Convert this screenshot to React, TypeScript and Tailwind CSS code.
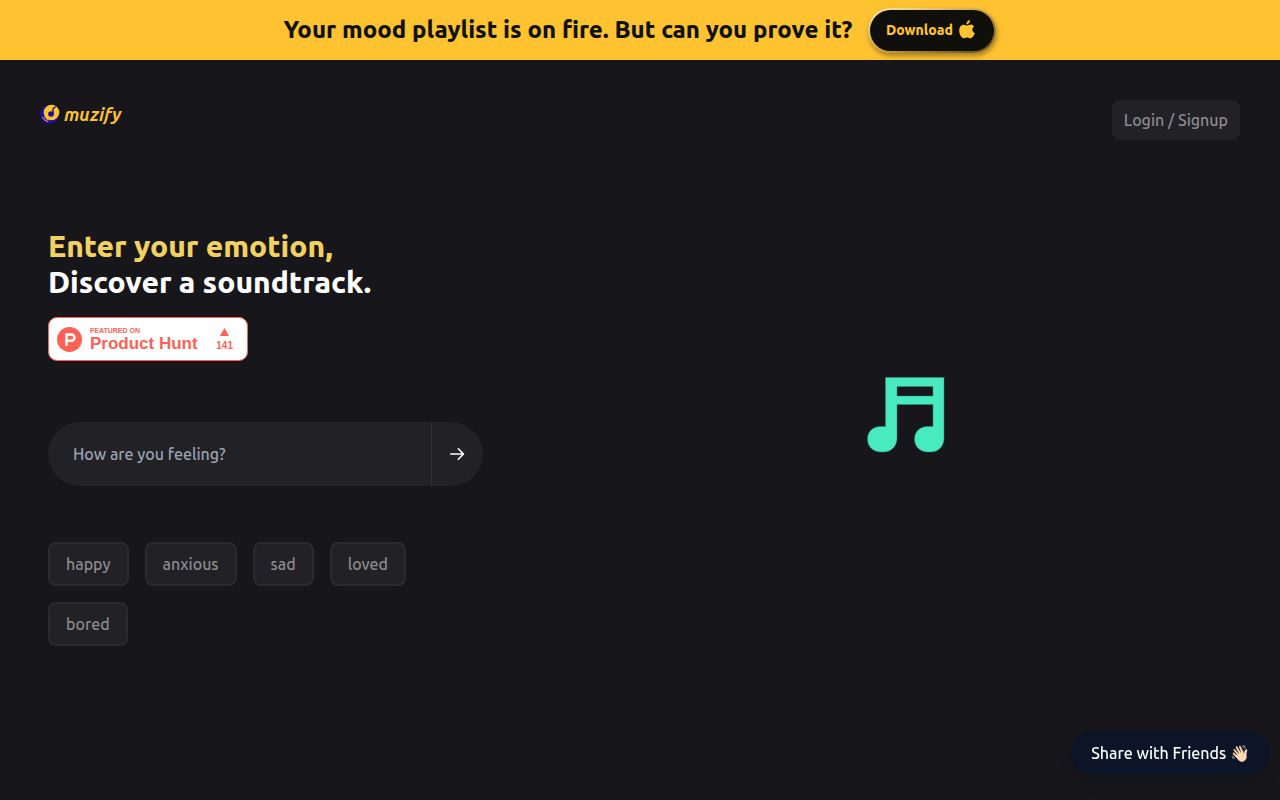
import { useState } from "react";

const moods: string[] = ["happy", "anxious", "sad", "loved", "bored"]

function Banner() {
    return <div className="flex min-h-[60px] items-center justify-center gap-4 bg-[#ffc331] px-4">
        <p className="text-2xl font-extrabold text-[#11120d]">Your mood playlist is on fire. But can you prove it?</p>
        <button className="h-[45px] w-32 shrink-0 rounded-full bg-linear-to-br from-[#ffe9ae] via-[#c9a24a] to-[#5f4a1a] p-[2px] shadow-[1px_3px_5px_rgba(0,0,0,0.35)]">
            <span className="flex h-full items-center justify-center gap-1.5 rounded-full bg-[#0f100b] pr-1 text-sm font-extrabold text-[#ffc331]">
                Download
                <svg width="16" height="20" viewBox="0 0 16 20" fill="currentColor" aria-hidden="true">
                    <path d="M11 0c.2 2-1.600 4.400-3.600 4.300C7.200 2.400 9 .3 11 0Z" />
                    <path d="M15 6.600c-2.400 1.700-2.100 5.400.8 6.600-.7 2.200-2.600 5.100-4.500 5.100-1.300 0-1.700-.8-3.200-.8s-2 .8-3.200.8C2.400 18.300.2 14.100.2 10.500c0-3.400 2.100-5.800 4.400-5.800 1.500 0 2.600.9 3.600.9 1 0 2.300-1 4.100-1 .9 0 2 .9 2.700 2Z" />
                </svg>
            </span>
        </button>
    </div>
}

function Logo() {
    return <a href="/" aria-label="muzify" className="flex h-7 items-center gap-1">
        <svg width="20" height="20" viewBox="0 0 20 20" aria-hidden="true">
            <circle cx="9.500" cy="10.500" r="9.500" fill="#1c0f9c" />
            <circle cx="11.500" cy="8.500" r="7.800" fill="#fdc32f" />
            <circle cx="11" cy="10" r="2.800" fill="#1c0f9c" />
            <path d="M13 10.500V5l2.500-2.500" stroke="#1c0f9c" strokeWidth="1.400" fill="none" />
            <path d="M2.500 13c1 2.500 3 4 5.500 4.500M4.500 12.500c.8 1.700 2 2.800 4 3.500" stroke="#fdc32f" strokeWidth="1" fill="none" />
        </svg>
        <span className="text-lg font-bold text-[#fdc32f] italic">muzify</span>
    </a>
}

function ProductHunt() {
    return <a href="/" className="mt-[17px] flex h-11 w-[200px] items-center rounded-[9px] border border-[#ff6154] bg-white pr-3.5 pl-2 font-['Liberation_Sans',sans-serif] font-bold text-[#ff6154]">
        <svg width="25" height="25" viewBox="0 0 25 25" aria-hidden="true">
            <circle cx="12.500" cy="12.500" r="12.500" fill="#ff6154" />
            <path d="M9.500 18.800V7.500h4.900a3.100 3.100 0 0 1 0 6.200h-4.900" fill="none" stroke="#fff" strokeWidth="2.400" />
        </svg>
        <span className="ml-2 flex flex-1 flex-col pt-0.5">
            <span className="text-[7px] leading-2">FEATURED ON</span>
            <span className="text-[17px] leading-[18px] whitespace-nowrap">Product Hunt</span>
        </span>
        <span className="flex flex-col items-center gap-1 pt-0.5">
            <svg width="9" height="8" viewBox="0 0 9 8" fill="currentColor" aria-hidden="true">
                <path d="M4.500 0L9 8H0Z" />
            </svg>
            <span className="text-[10px] leading-3">141</span>
        </span>
    </a>
}

export default function App() {
    const [mood, setMood] = useState("")

    return <div className="min-h-screen bg-[#17161b] font-['Ubuntu','Noto_Sans',sans-serif] text-base font-[465] text-white">
        <Banner />
        <header className="flex items-start justify-between p-10">
            <Logo />
            <button className="h-10 rounded-lg bg-[#222126] px-3 text-[#8b8b8d]">Login / Signup</button>
        </header>

        <main className="flex items-start gap-24 px-12 pt-12">
            <section className="w-full max-w-[435px]">
                <h1 className="text-3xl font-extrabold">
                    <span className="block text-[#f2d160]">Enter your emotion,</span>
                    <span className="block">Discover a soundtrack.</span>
                </h1>
                <ProductHunt />

                <form onSubmit={(e) => e.preventDefault()} className="mt-[61px] flex h-16 overflow-hidden rounded-full bg-[#222126]">
                    <input
                        type="text"
                        aria-label="How are you feeling?"
                        placeholder="How are you feeling?"
                        value={mood}
                        onChange={(e) => setMood(e.target.value)}
                        className="min-w-0 flex-1 px-[25px] outline-none placeholder:text-[#9ca3af]"
                    />
                    <button aria-label="Search" className="flex w-[52px] items-center justify-center border-l border-[#303035]">
                        <svg width="16" height="14" viewBox="0 0 16 14" fill="none" stroke="#fff" strokeWidth="1.600" strokeLinecap="round" strokeLinejoin="round" aria-hidden="true">
                            <path d="M.8 7H13.500M8.300 1.800L13.500 7L8.300 12.200" />
                        </svg>
                    </button>
                </form>

                <div className="mt-14 flex flex-wrap gap-4">
                    {moods.map((m) => (
                        <button key={m} onClick={() => setMood(m)}
                            className="h-11 rounded-lg border-2 border-[#2b2a2f] bg-[#222126] px-4 text-[#8b8b8d]">
                            {m}
                        </button>
                    ))}
                </div>
            </section>

            <div className="flex flex-1 justify-center pt-[149px]">
                <svg width="78" height="76" viewBox="0 0 78 76" role="img" aria-label="Music note">
                    <path fillRule="evenodd" fill="#47ebbf" stroke="#2b8f78" strokeWidth="0.500"
                        d="M18.500.500H77V61C77 69 72 75 63.500 75H61C53 75 47.500 69.500 47.500 62S53 49.500 60.500 49.500H66V27.500H30V61C30 69 24.500 75 16.500 75H14C6 75 .500 69.500.500 62S6 49.500 13.500 49.500H18.500ZM30 9.500V19H66V9.500Z" />
                </svg>
            </div>
        </main>

        <button className="fixed right-2.5 bottom-[25px] h-11 rounded-full bg-[#0c1527] px-5 shadow-lg">
            Share with Friends 👋🏻
        </button>
    </div>
}
